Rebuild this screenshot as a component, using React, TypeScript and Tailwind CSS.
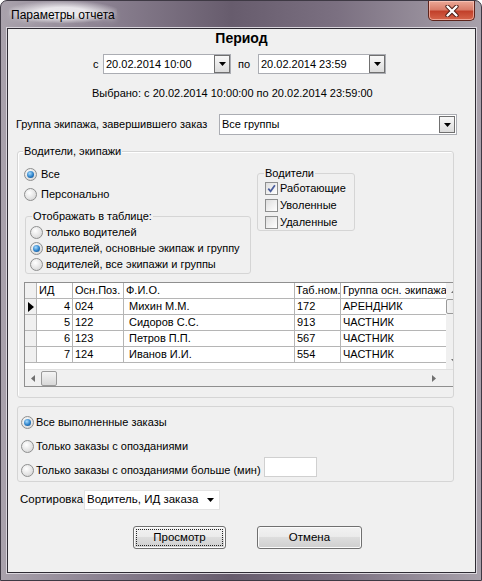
import React from "react";

type Row = { id: number; pos: string; fio: string; tab: string; grp: string; cur?: boolean };

const rows: Row[] = [
  { id: 4, pos: "024", fio: "Михин М.М.", tab: "172", grp: "АРЕНДНИК", cur: true },
  { id: 5, pos: "122", fio: "Сидоров С.С.", tab: "913", grp: "ЧАСТНИК" },
  { id: 6, pos: "123", fio: "Петров П.П.", tab: "567", grp: "ЧАСТНИК" },
  { id: 7, pos: "124", fio: "Иванов И.И.", tab: "554", grp: "ЧАСТНИК" },
];

function Arrow() {
  return (
    <svg width="7" height="4" viewBox="0 0 7 4">
      <path d="M0 0H7L3.5 4Z" fill="#000" />
    </svg>
  );
}

function DropButton({ className }: { className: string }) {
  return (
    <span
      className={`w-[16px] border border-[#707070] bg-[linear-gradient(#f8f8f8,#dcdcdc)] flex items-center justify-center shrink-0 ${className}`}
    >
      <Arrow />
    </span>
  );
}

function Radio({ checked }: { checked?: boolean }) {
  return (
    <span className="w-[13px] h-[13px] rounded-full border border-[#8e8f8f] bg-[radial-gradient(circle_at_40%_35%,#ffffff,#e2e2e2_60%,#cfcfcf)] flex items-center justify-center shrink-0">
      {checked ? (
        <span className="w-[7px] h-[7px] rounded-full bg-[radial-gradient(circle_at_40%_35%,#a8dcff,#2b80c8_55%,#0b3f7c)]" />
      ) : null}
    </span>
  );
}

function Check({ checked }: { checked?: boolean }) {
  return (
    <span className="w-[13px] h-[13px] border border-[#8e8f8f] bg-[linear-gradient(135deg,#dedede,#ffffff)] flex items-center justify-center shrink-0">
      {checked ? (
        <svg width="9" height="9" viewBox="0 0 9 9">
          <path d="M1.3 4.6 L3.6 7.3 L7.9 1.2" stroke="#4a5d9c" strokeWidth="1.7" fill="none" />
        </svg>
      ) : null}
    </span>
  );
}

function RadioRow({ checked, label, className }: { checked?: boolean; label: string; className: string }) {
  return (
    <div className={`flex items-center whitespace-nowrap ${className}`}>
      <Radio checked={checked} />
      <span>{label}</span>
    </div>
  );
}

function Legend({ text, className }: { text: string; className: string }) {
  return (
    <span className={`absolute top-[-8px] bg-[#f0f0f0] px-[1px] leading-[14px] whitespace-nowrap ${className}`}>
      {text}
    </span>
  );
}

function DataGrid() {
  return (
    <div className="ml-[6px] w-[429px] h-[105px] border-t border-l border-b border-[#8f8f8f] bg-white flex flex-col overflow-hidden">
      <div className="flex h-[86px]">
        <div className="w-[421px] flex flex-col">
          <div className="flex h-[16px] leading-[15px] bg-white">
            <div className="w-[12px] border-r border-b border-[#b5b5b5] bg-[#f0f0f0]" />
            <div className="w-[36px] border-r border-b border-[#b5b5b5] pl-[2px]">ИД</div>
            <div className="w-[51px] border-r border-b border-[#b5b5b5] pl-[2px]">Осн.Поз.</div>
            <div className="w-[171px] border-r border-b border-[#b5b5b5] pl-[2px]">Ф.И.О.</div>
            <div className="w-[46px] border-r border-b border-[#b5b5b5] pl-[1px] whitespace-nowrap overflow-hidden">Таб.ном.</div>
            <div className="w-[105px] border-b border-[#b5b5b5] pl-[2px] whitespace-nowrap overflow-hidden">Группа осн. экипажа</div>
          </div>
          {rows.map((r) => (
            <div key={r.id} className="flex h-[16px] leading-[15px]">
              <div className="w-[12px] border-r border-b border-[#b5b5b5] bg-[#f0f0f0] flex items-center justify-center">
                {r.cur ? (
                  <svg width="6" height="10" viewBox="0 0 6 10">
                    <path d="M0 0L6 5L0 10Z" fill="#000" />
                  </svg>
                ) : null}
              </div>
              <div className="w-[36px] border-r border-b border-[#b5b5b5] pr-[2px] text-right">{r.id}</div>
              <div className="w-[51px] border-r border-b border-[#b5b5b5] pl-[2px]">{r.pos}</div>
              <div className="w-[171px] border-r border-b border-[#b5b5b5] pl-[5px]">{r.fio}</div>
              <div className="w-[46px] border-r border-b border-[#b5b5b5] pl-[2px]">{r.tab}</div>
              <div className="w-[105px] border-b border-[#b5b5b5] pl-[2px]">{r.grp}</div>
            </div>
          ))}
        </div>
        <div className="w-[8px] overflow-hidden bg-[#f0f0f0] flex flex-col items-start">
          <div className="h-[16px] w-[17px] flex items-center justify-center">
            <svg width="7" height="4" viewBox="0 0 7 4">
              <path d="M0 4H7L3.5 0Z" fill="#707070" />
            </svg>
          </div>
          <div className="h-[15px] w-[17px] rounded-[2px] border border-[#9a9a9a] bg-[linear-gradient(90deg,#f4f4f4,#dcdcdc)]" />
          <div className="flex-1" />
          <div className="h-[16px] w-[17px] flex items-center justify-center">
            <svg width="7" height="4" viewBox="0 0 7 4">
              <path d="M0 0H7L3.5 4Z" fill="#707070" />
            </svg>
          </div>
        </div>
      </div>
      <div className="h-[17px] bg-[#f0f0f0] flex items-center border-t border-[#e0e0e0]">
        <div className="w-[16px] flex justify-center">
          <svg width="4" height="7" viewBox="0 0 4 7">
            <path d="M4 0V7L0 3.5Z" fill="#707070" />
          </svg>
        </div>
        <div className="w-[16px] h-[15px] rounded-[2px] border border-[#9a9a9a] bg-[linear-gradient(#f4f4f4,#d8d8d8)]" />
        <div className="flex-1" />
        <div className="w-[16px] flex justify-center mr-[11px]">
          <svg width="4" height="7" viewBox="0 0 4 7">
            <path d="M0 0V7L4 3.5Z" fill="#707070" />
          </svg>
        </div>
      </div>
    </div>
  );
}

function Button({ label, focused, className }: { label: string; focused?: boolean; className: string }) {
  return (
    <div
      className={`h-[23px] rounded-[3px] border border-[#707070] bg-[linear-gradient(#f2f2f2_0%,#ebebeb_45%,#dddddd_50%,#cfcfcf_100%)] shadow-[inset_0_0_0_1px_#fbfbfb] p-[2px] ${className}`}
    >
      <div
        className={`h-full flex items-center justify-center ${
          focused ? "border border-dotted border-[#222]" : "border border-transparent"
        }`}
      >
        {label}
      </div>
    </div>
  );
}

export default function App() {
  return (
    <div className="w-[482px] h-[581px] overflow-hidden rounded-t-[7px] border border-[#3e3944] bg-[linear-gradient(90deg,#a9a2ac_0%,#8a8090_22%,#675c6d_48%,#7b7081_70%,#a8a1ab_100%)] font-['Liberation_Sans',Arial,sans-serif] text-[11px] text-black flex flex-col">
      <div className="h-[27px] flex items-start justify-between pl-[8px] pr-[6px]">
        <div className="pt-[6px] text-[12px] leading-[16px] px-[2px] bg-[radial-gradient(ellipse_at_center,rgba(240,238,242,0.9)_30%,rgba(240,238,242,0)_75%)] [text-shadow:0_0_6px_#ffffff]">
          Параметры отчета
        </div>
        <div className="w-[47px] h-[20px] rounded-b-[5px] border border-t-0 border-[#5e241c] bg-[linear-gradient(#eba897_0%,#d97d6a_45%,#c2412b_55%,#d6654b_100%)] shadow-[inset_0_0_0_1px_rgba(255,210,200,0.6)] flex items-center justify-center">
          <svg width="14" height="12" viewBox="0 0 14 12">
            <path d="M2.5 1.5 L11.5 10.5 M11.5 1.5 L2.5 10.5" stroke="#4a1b14" strokeWidth="4.2" strokeLinecap="round" />
            <path d="M2.5 1.5 L11.5 10.5 M11.5 1.5 L2.5 10.5" stroke="#ffffff" strokeWidth="2.4" strokeLinecap="round" />
          </svg>
        </div>
      </div>

      <div className="ml-[6px] w-[469px] h-[545px] border border-[#2e2b33] bg-[#f0f0f0] shadow-[0_0_0_1px_#d9d5dc] flex flex-col">
        <div className="pt-[1px] text-center font-bold text-[14px] leading-[16px]">Период</div>

        <div className="mt-[8px] pl-[85px] flex items-center h-[20px]">
          <span className="w-[10px]">с</span>
          <div className="w-[128px] h-[20px] bg-white border border-[#abadb3] flex items-center pl-[2px]">
            <span className="flex-1">20.02.2014 10:00</span>
            <DropButton className="h-[18px]" />
          </div>
          <span className="w-[27px] pl-[7px]">по</span>
          <div className="w-[128px] h-[20px] bg-white border border-[#abadb3] flex items-center pl-[2px]">
            <span className="flex-1">20.02.2014 23:59</span>
            <DropButton className="h-[18px]" />
          </div>
        </div>

        <div className="mt-[12px] pl-[84px] leading-[14px] whitespace-nowrap">
          Выбрано: с 20.02.2014 10:00:00 по 20.02.2014 23:59:00
        </div>

        <div className="mt-[14px] pl-[8px] flex items-center h-[21px]">
          <span className="w-[203px] whitespace-nowrap">Группа экипажа, завершившего заказ</span>
          <div className="w-[238px] h-[21px] bg-white border border-[#abadb3] flex items-center pl-[2px] pr-[1px]">
            <span className="flex-1">Все группы</span>
            <DropButton className="h-[17px]" />
          </div>
        </div>

        <div className="relative mt-[16px] ml-[9px] w-[437px] h-[247px] border border-[#d5d5d5] rounded-[3px] shadow-[inset_1px_1px_0_#ffffff]">
          <Legend text="Водители, экипажи" className="left-[5px]" />
          <div className="flex">
            <div className="w-[239px] pl-[6px] pt-[15px]">
              <RadioRow checked label="Все" className="h-[14px] gap-[4px]" />
              <RadioRow label="Персонально" className="mt-[6px] h-[14px] gap-[4px]" />
              <div className="relative mt-[15px] ml-[1px] w-[226px] h-[58px] border border-[#d5d5d5] rounded-[3px]">
                <Legend text="Отображать в таблице:" className="left-[6px]" />
                <div className="pt-[7px] pl-[4px]">
                  <RadioRow label="только водителей" className="h-[16px] gap-[3px]" />
                  <RadioRow checked label="водителей, основные экипаж и группу" className="h-[16px] gap-[3px]" />
                  <RadioRow label="водителей, все экипажи и группы" className="h-[16px] gap-[3px]" />
                </div>
              </div>
            </div>
            <div className="relative mt-[21px] w-[98px] h-[58px] border border-[#d5d5d5] rounded-[3px]">
              <Legend text="Водители" className="left-[6px]" />
              <div className="pt-[6px] pl-[7px]">
                <div className="flex items-center gap-[2px] h-[17px]">
                  <Check checked />
                  <span>Работающие</span>
                </div>
                <div className="flex items-center gap-[2px] h-[17px]">
                  <Check />
                  <span>Уволенные</span>
                </div>
                <div className="flex items-center gap-[2px] h-[17px]">
                  <Check />
                  <span>Удаленные</span>
                </div>
              </div>
            </div>
          </div>
          <div className="mt-[8px]">
            <DataGrid />
          </div>
        </div>

        <div className="mt-[8px] ml-[9px] w-[437px] h-[76px] border border-[#d5d5d5] rounded-[3px] pl-[3px] pt-[8px] flex flex-col gap-[10px] text-[11px]">
          <RadioRow checked label="Все выполненные заказы" className="h-[14px] gap-[2px]" />
          <RadioRow label="Только заказы с опозданиями" className="h-[14px] gap-[2px]" />
          <div className="flex items-center h-[14px] gap-[2px] whitespace-nowrap">
            <Radio />
            <span className="w-[226px] shrink-0">Только заказы с опозданиями больше (мин)</span>
            <div className="w-[53px] h-[20px] bg-white border border-[#d0d0d0] mb-[6px] shrink-0" />
          </div>
        </div>

        <div className="mt-[8px] pl-[12px] flex items-center h-[20px] text-[11.5px]">
          <span className="w-[64px]">Сортировка</span>
          <div className="w-[136px] h-[20px] bg-white border border-[#e3e3e3] flex items-center pl-[2px] pr-[5px]">
            <span className="flex-1 whitespace-nowrap">Водитель, ИД заказа</span>
            <Arrow />
          </div>
        </div>

        <div className="mt-[16px] pl-[125px] flex gap-[31px] text-[11.5px]">
          <Button label="Просмотр" focused className="w-[93px]" />
          <Button label="Отмена" className="w-[105px]" />
        </div>
      </div>
    </div>
  );
}
